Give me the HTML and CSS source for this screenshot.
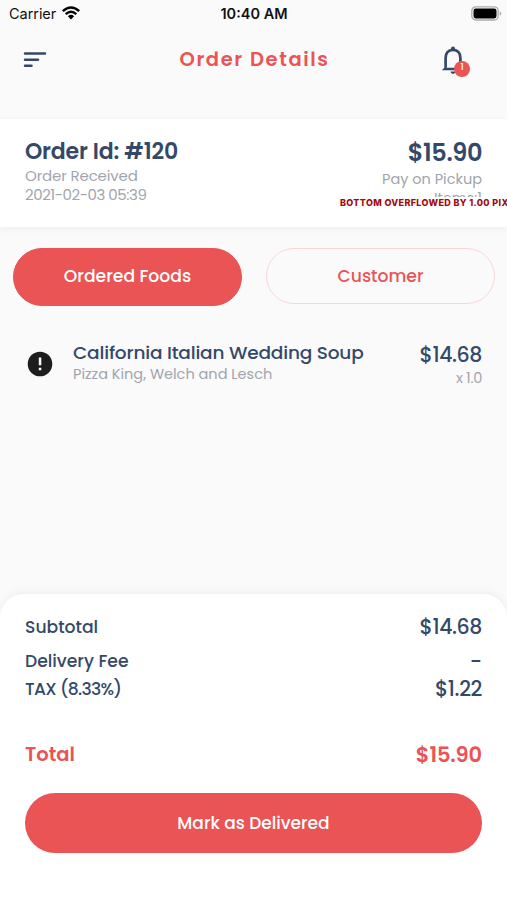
FILE: index.html
```html
<!DOCTYPE html>
<html lang="en">
<head>
<meta charset="utf-8">
<title>Order Details</title>
<link rel="stylesheet" href="styles.css">
</head>
<body>
<div class="screen">
  <div class="status">
    <div class="carrier"><span>Carrier</span>
      <svg width="18" height="14" viewBox="0 0 18 14"><g fill="none" stroke="#050505" stroke-width="2.5"><path d="M.8 5.1Q9-2.2 17.2 5.1"/><path d="M3.7 8.1Q9 3.4 14.3 8.1"/></g><path d="M5.9 10.2Q9 7.5 12.1 10.2L9 13.5z"/></svg>
    </div>
    <div class="clock">10:40 AM</div>
    <svg class="battery" width="31" height="15" viewBox="0 0 31 15"><rect x=".8" y=".8" width="26.4" height="13.2" rx="4" fill="#fafafa" stroke="#aaa" stroke-width="1.3"/><rect x="2.5" y="2.4" width="23" height="10" rx="2.3"/><path d="M28.8 5q3 2.4 0 4.8z" fill="#aaa"/></svg>
  </div>
  <header class="appbar">
    <svg width="24" height="16" viewBox="0 0 24 16"><path d="M2 1.5h20M2 7.7h13M2 13.8h6.5" stroke="#344968" stroke-width="2.5" stroke-linecap="round"/></svg>
    <h1>Order Details</h1>
    <div class="bell">
      <svg width="24" height="29" viewBox="0 0 24 29"><path d="M4.6 21.5V12.2C4.6 7 7.3 4 12 4s7.4 3 7.4 8.2v9.3" fill="none" stroke="#344968" stroke-width="2.7"/><path d="M.8 24.2 4.5 20.4l1.5 1.4h12l1.5-1.4 3.7 3.8zM9.5 25.6h5q-.3 2.4-2.5 2.4t-2.5-2.4z" fill="#344968"/><circle cx="12" cy="2.7" r="2.1" fill="#344968"/></svg>
      <span class="badge">1</span>
    </div>
  </header>
  <section class="order">
    <div class="info">
      <div class="order-id">Order Id: #120</div>
      <div class="note received">Order Received</div>
      <div class="note date">2021-02-03 05:39</div>
    </div>
    <div class="payment">
      <div class="amount">$15.90</div>
      <div class="note method">Pay on Pickup</div>
      <div class="note items">Items:1</div>
      <div class="overflow">BOTTOM OVERFLOWED BY 1.00 PIXELS</div>
    </div>
  </section>
  <nav class="tabs">
    <div class="tab active">Ordered Foods</div>
    <div class="tab">Customer</div>
  </nav>
  <main class="food">
    <svg class="alert" width="26" height="26" viewBox="0 0 26 26"><circle cx="13" cy="13" r="12.3" fill="#1d1d1d"/><path d="M11.8 6.5h2.5v7.8h-2.5zM11.8 16.7h2.5v2.5h-2.5z" fill="#fafafa"/></svg>
    <div class="dish">
      <div class="dish-name">California Italian Wedding Soup</div>
      <div class="note shop">Pizza King, Welch and Lesch</div>
    </div>
    <div class="cost">
      <div class="price">$14.68</div>
      <div class="note qty">x 1.0</div>
    </div>
  </main>
  <footer class="summary">
    <div class="row"><span class="subtotal">Subtotal</span><span class="price">$14.68</span></div>
    <div class="row fee"><span class="delivery">Delivery Fee</span><span class="dash">-</span></div>
    <div class="row tax"><span class="tax-label">TAX (8.33%)</span><span class="price tax-price">$1.22</span></div>
    <div class="row total"><span>Total</span><span class="total-price">$15.90</span></div>
    <div class="deliver">Mark as Delivered</div>
  </footer>
</div>
</body>
</html>
```
FILE: styles.css
```css
* { box-sizing: border-box; }
body { margin: 0; background: #fafafa; color: #344968; font-family: Poppins, Inter, sans-serif; font-weight: 500; }
svg { display: block; flex: none; }
.screen { width: 507px; height: 900px; overflow: hidden; display: flex; flex-direction: column; white-space: nowrap; }
.status { height: 28px; display: grid; grid-template-columns: 1fr auto 1fr; align-items: center; padding: 0 5px 1px 9px; color: #111; font: 14.5px/28px Inter, sans-serif; }
.carrier { display: flex; gap: 6px; align-items: center; letter-spacing: -.05px; }
.carrier svg { margin-top: -3px; }
.clock { font-weight: 600; font-size: 14.5px; margin-right: 3px; }
.battery { justify-self: end; margin-top: -1px; }
.appbar { height: 91px; padding: 17px 42px 0 23px; display: flex; align-items: flex-start; justify-content: space-between; }
.appbar > svg { margin-top: 7px; }
h1 { margin: 1px 0 0 21px; color: #ea5455; font-size: 19.5px; line-height: 28px; font-weight: 600; letter-spacing: 1.6px; }
.bell { position: relative; width: 24px; }
.bell svg { margin-top: 1px; }
.badge { position: absolute; left: 13px; top: 16px; width: 16px; height: 16px; border-radius: 50%; background: #ea5455; color: #fff; text-align: center; font-size: 9px; line-height: 13px; }
.order { height: 108px; background: #fff; box-shadow: 0 2px 8px rgba(0,0,0,.05); padding: 0 25px; display: flex; justify-content: space-between; position: relative; }
.order-id { margin-top: 19px; font-size: 22px; line-height: 28px; font-weight: 600; letter-spacing: -.15px; }
.note { color: #a1a5ad; font-weight: 400; font-size: 14.5px; line-height: 20px; }
.received { font-size: 15px; letter-spacing: -.15px; line-height: 19px; }
.date { font-size: 15px; letter-spacing: -.45px; }
.payment { display: flex; flex-direction: column; align-items: flex-end; }
.amount { margin-top: 19px; font-size: 24px; line-height: 30px; font-weight: 600; letter-spacing: -.4px; }
.method { margin-top: 1px; line-height: 20px; }
.items { margin-top: 2px; height: 6px; overflow: hidden; line-height: 15px; }
.overflow { position: absolute; left: 340px; top: 78px; color: #a20b10; font-family: Inter, sans-serif; font-size: 9px; font-weight: 800; line-height: 12px; letter-spacing: .35px; }
.tabs { padding: 21px 12px 0 13px; display: grid; grid-template-columns: 229px 229px; gap: 24px; align-items: start; }
.tab { height: 56px; border: 1px solid #fad5d8; border-radius: 30px; color: #ea5455; text-align: center; font-size: 17.2px; line-height: 54px; }
.tab.active { height: 58px; background: #ea5455; border-color: #ea5455; color: #fff; }
.food { display: flex; height: 288px; padding: 33px 25px 0 27px; align-items: flex-start; }
.alert { margin-top: 12px; }
.dish { margin-left: 20px; flex: 1; }
.dish-name { font-size: 18.5px; line-height: 27px; letter-spacing: -.18px; }
.shop { line-height: 17px; }
.cost { text-align: right; }
.cost .price { line-height: 31px; }
.price { font-size: 20.5px; line-height: 32px; letter-spacing: -.4px; }
.qty { line-height: 16px; letter-spacing: -.3px; }
.summary { height: 306px; background: #fff; border-radius: 24px 24px 0 0; box-shadow: 0 -2px 8px rgba(0,0,0,.05); padding: 17px 25px 0; }
.row { height: 32px; display: flex; justify-content: space-between; align-items: center; font-size: 17.2px; }
.fee { height: 36px; }
.dash { font-size: 21px; }
.tax { height: 20px; }
.tax-label { letter-spacing: -.65px; }
.total { height: 32px; margin-top: 39px; color: #ea5455; font-size: 19.5px; font-weight: 600; }
.total-price { font-size: 21px; letter-spacing: -.15px; }
.deliver { margin-top: 23px; height: 60px; border-radius: 30px; background: #ea5455; color: #fff; text-align: center; font-size: 17px; line-height: 61px; }
```
